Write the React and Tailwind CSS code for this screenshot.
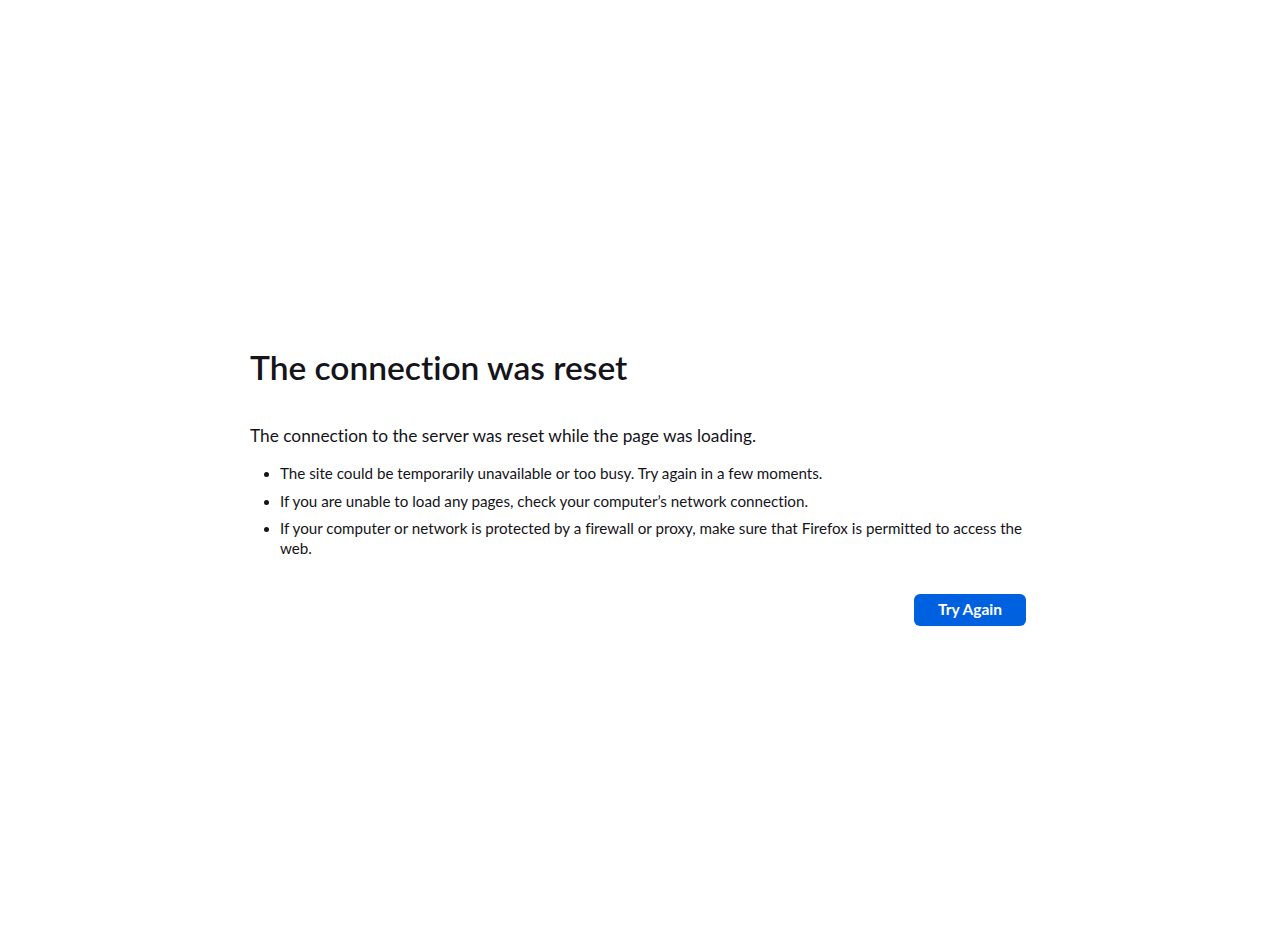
import React from 'react';

const items = [
  'The site could be temporarily unavailable or too busy. Try again in a few moments.',
  'If you are unable to load any pages, check your computer\u2019s network connection.',
  'If your computer or network is protected by a firewall or proxy, make sure that Firefox is permitted to access the web.',
];

export default function App() {
  return (
    <div
      className="min-h-[951px] bg-white text-[#15141a] [font-variant-ligatures:none]"
      style={{ fontFamily: 'Lato, "Open Sans", sans-serif' }}
    >
      <div className="w-[776px] ml-[250px] pt-[344px]">
        {/* title */}
        <h1 className="text-[33.5px] leading-[46px] font-semibold">The connection was reset</h1>

        {/* description */}
        <p className="mt-[34px] text-[17.3px] leading-[24px]">
          The connection to the server was reset while the page was loading.
        </p>

        <ul className="mt-[15px] pl-[30px] list-disc text-[15.2px] leading-[20px] marker:text-[14px]">
          {items.map((t) => (
            <li key={t} className="mb-[7.5px]">{t}</li>
          ))}
        </ul>

        <div className="flex justify-end mt-[36px]">
          <button className="w-[112px] h-[32px] rounded-[6px] bg-[#0061e0] text-white text-[15.5px] font-bold">
            Try Again
          </button>
        </div>
      </div>
    </div>
  );
}
